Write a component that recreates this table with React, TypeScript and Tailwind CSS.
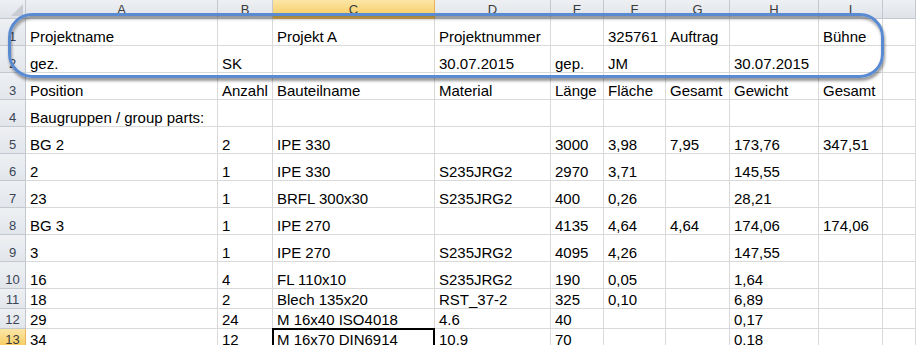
const cols = [
  { key: "A", w: "w-[192px]" },
  { key: "B", w: "w-[55px]" },
  { key: "C", w: "w-[162px]" },
  { key: "D", w: "w-[116px]" },
  { key: "E", w: "w-[53px]" },
  { key: "F", w: "w-[62px]" },
  { key: "G", w: "w-[64px]" },
  { key: "H", w: "w-[89px]" },
  { key: "I", w: "w-[64px]" },
  { key: "J", w: "flex-1" },
];

type Row = { n: number; h: string; cells: string[] };

const rows: Row[] = [
  { n: 1, h: "h-[27px]", cells: ["Projektname", "", "Projekt A", "Projektnummer", "", "325761", "Auftrag", "", "Bühne"] },
  { n: 2, h: "h-[27px]", cells: ["gez.", "SK", "", "30.07.2015", "gep.", "JM", "", "30.07.2015", ""] },
  { n: 3, h: "h-[27px]", cells: ["Position", "Anzahl", "Bauteilname", "Material", "Länge", "Fläche", "Gesamt", "Gewicht", "Gesamt"] },
  { n: 4, h: "h-[27px]", cells: ["Baugruppen / group parts:"] },
  { n: 5, h: "h-[27px]", cells: ["BG 2", "2", "IPE 330", "", "3000", "3,98", "7,95", "173,76", "347,51"] },
  { n: 6, h: "h-[27px]", cells: ["2", "1", "IPE 330", "S235JRG2", "2970", "3,71", "", "145,55", ""] },
  { n: 7, h: "h-[27px]", cells: ["23", "1", "BRFL 300x30", "S235JRG2", "400", "0,26", "", "28,21", ""] },
  { n: 8, h: "h-[27px]", cells: ["BG 3", "1", "IPE 270", "", "4135", "4,64", "4,64", "174,06", "174,06"] },
  { n: 9, h: "h-[27px]", cells: ["3", "1", "IPE 270", "S235JRG2", "4095", "4,26", "", "147,55", ""] },
  { n: 10, h: "h-[27px]", cells: ["16", "4", "FL 110x10", "S235JRG2", "190", "0,05", "", "1,64", ""] },
  { n: 11, h: "h-[20px]", cells: ["18", "2", "Blech 135x20", "RST_37-2", "325", "0,10", "", "6,89", ""] },
  { n: 12, h: "h-[20px]", cells: ["29", "24", "M 16x40 ISO4018", "4.6", "40", "", "", "0,17", ""] },
  { n: 13, h: "h-[20px]", cells: ["34", "12", "M 16x70 DIN6914", "10.9", "70", "", "", "0,18", ""] },
];

export default function App() {
  return (
    <div className="relative h-[345px] w-[916px] overflow-hidden bg-white font-['Liberation_Sans',Arial,sans-serif] text-black">
      {/* column headers */}
      <div className="flex h-[19px]">
        <div className="relative w-[26px] shrink-0 border-r border-b border-[#c3c8cf] bg-gradient-to-b from-[#eef0f3] to-[#dfe3e8]">
          <svg className="absolute right-[2px] bottom-[2px]" width="12" height="12" viewBox="0 0 12 12">
            <path d="M12 0V12H0Z" fill="#c9cdd3" />
          </svg>
        </div>
        {cols.map((c) => (
          <div
            key={c.key}
            className={`${c.w} shrink-0 flex items-center justify-center border-r border-b text-[13px] leading-none ${
              c.key === "C"
                ? "border-[#e9b25a] bg-gradient-to-b from-[#fbe6a6] to-[#f6ca57] text-[#3b3b3b]"
                : "border-[#c3c8cf] bg-gradient-to-b from-[#eef0f3] to-[#dfe3e8] text-[#3b3b3b]"
            }`}
          >
            {c.key === "J" ? "" : c.key}
          </div>
        ))}
      </div>

      {rows.map((r) => (
        <div key={r.n} className={`flex ${r.h}`}>
          <div
            className={`w-[26px] shrink-0 flex items-end justify-center pb-[1px] border-r border-b text-[13px] leading-[15px] ${
              r.n === 13
                ? "border-[#e9b25a] bg-gradient-to-b from-[#fbe6a6] to-[#f6ca57] text-[#3b3b3b]"
                : "border-[#c3c8cf] bg-gradient-to-b from-[#eef0f3] to-[#e2e6eb] text-[#3a4457]"
            }`}
          >
            {r.n}
          </div>
          {cols.map((c, i) => (
            <div
              key={c.key}
              className={`relative ${c.w} shrink-0 flex items-end pl-[4px] border-r border-b border-[#d9d9d9] text-[15px] leading-[17px] whitespace-nowrap`}
            >
              {r.cells[i] ?? ""}
              {r.n === 13 && c.key === "C" && (
                <div className="absolute -top-[1px] -left-[1px] -right-[1px] -bottom-[1px] border-2 border-black" />
              )}
            </div>
          ))}
        </div>
      ))}

      {/* annotation frame */}
      <div className="pointer-events-none absolute left-[8px] top-[13px] h-[65px] w-[876px] rounded-[24px] border-[3px] border-[#5a8bd2] shadow-[1px_3px_3px_rgba(0,0,0,0.4),inset_1px_3px_3px_rgba(0,0,0,0.35)]" />
    </div>
  );
}
